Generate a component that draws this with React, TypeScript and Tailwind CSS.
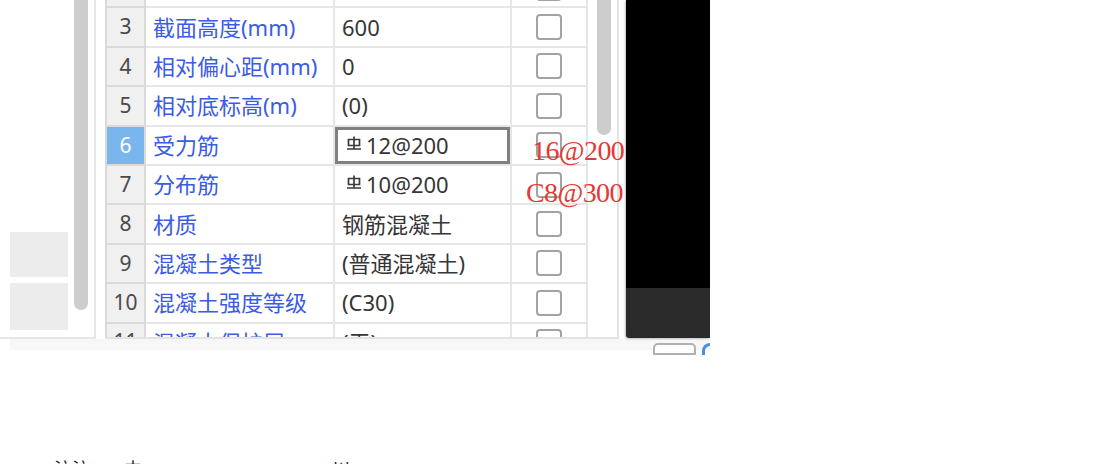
import React from 'react';

type Row = { n: number; name: string; value: string; bar?: boolean; selected?: boolean };

const rows: Row[] = [
  { n: 2, name: '截面宽度(mm)', value: '300' },
  { n: 3, name: '截面高度(mm)', value: '600' },
  { n: 4, name: '相对偏心距(mm)', value: '0' },
  { n: 5, name: '相对底标高(m)', value: '(0)' },
  { n: 6, name: '受力筋', value: '12@200', bar: true, selected: true },
  { n: 7, name: '分布筋', value: '10@200', bar: true },
  { n: 8, name: '材质', value: '钢筋混凝土' },
  { n: 9, name: '混凝土类型', value: '(普通混凝土)' },
  { n: 10, name: '混凝土强度等级', value: '(C30)' },
  { n: 11, name: '混凝土保护层', value: '(无)' },
];

// rebar grade symbol (HRB400), drawn since no font has it
function BarMark() {
  return (
    <svg width="18" height="14" viewBox="0 0 18 14" className="mr-[3px] mb-[5px] shrink-0">
      <path d="M9 0.5V13M3.5 3.5h11v6h-11zM2 13h14" fill="none" stroke="#3a3a3a" strokeWidth="1.7" />
    </svg>
  );
}

function Checkbox() {
  return <div className="w-[26px] h-[26px] border-2 border-[#a3a3a3] rounded-[4px] bg-white" />;
}

export default function App() {
  return (
    <div className="relative w-[1112px] h-[464px] bg-white overflow-hidden font-['Noto_Sans','Noto_Sans_CJK_SC',sans-serif]">
      {/* top screenshot block */}
      <div className="flex w-[710px] h-[339px]">
        {/* left panel */}
        <div className="flex w-[96px] h-[339px] border-r-2 border-b-2 border-[#e6e6e6]">
          <div className="w-[74px] flex flex-col pt-[232px] pl-[10px] gap-[6px]">
            <div className="w-[58px] h-[45px] bg-[#ececec]" />
            <div className="w-[58px] h-[47px] bg-[#ececec]" />
          </div>
          <div className="w-[14px] h-[310px] bg-[#cdcdcd] rounded-b-full" />
        </div>

        <div className="w-[9px]" />

        {/* property table */}
        <div className="flex w-[514px] h-[339px] border-r-2 border-b-2 border-[#e3e3e3]">
          <div className="w-[483px] h-[337px] overflow-hidden border-l-2 border-[#d9d9d9]">
            <div className="-mt-[31px] grid grid-cols-[39px_189px_177px_76px]">
              {rows.map((r) => (
                <React.Fragment key={r.n}>
                  <div
                    className={`h-[39.4px] flex items-center justify-center border-r-2 border-b-2 border-[#dadada] text-[21px] ${
                      r.selected ? 'bg-[#7ab6ee] text-white' : 'bg-[#f0f0f0] text-[#4a4a4a]'
                    }`}
                  >
                    {r.n}
                  </div>
                  <div className="h-[39.4px] flex items-center pl-[7px] border-r-2 border-b-2 border-[#e6e6e6] text-[22px] text-[#3b5ce4] whitespace-nowrap">
                    {r.name}
                  </div>
                  <div
                    className={`h-[39.4px] flex items-center pl-[7px] border-r-2 border-b-2 border-[#e6e6e6] text-[22px] text-[#363636] whitespace-nowrap ${
                      r.selected ? 'shadow-[inset_0_0_0_3px_#808080]' : ''
                    }`}
                  >
                    {r.bar && <span className="pl-[3px]"><BarMark /></span>}
                    {r.value}
                  </div>
                  <div className="h-[39.4px] flex items-center justify-center border-r-2 border-b-2 border-[#e6e6e6]">
                    <Checkbox />
                  </div>
                </React.Fragment>
              ))}
            </div>
          </div>
          <div className="w-[9px]" />
          <div className="w-[14px] h-[135px] bg-[#cdcdcd] rounded-b-full" />
        </div>

        <div className="w-[7px]" />

        {/* graphics view */}
        <div className="flex-1 h-[338px] flex flex-col rounded-bl-[3px] overflow-hidden shadow-[-1px_1px_2px_rgba(0,0,0,0.25)]">
          <div className="h-[288px] bg-black" />
          <div className="flex-1 bg-[#2a2a2a]" />
        </div>
      </div>

      {/* bottom strip of dialog */}
      <div className="flex ml-[10px] w-[700px] h-[11px] bg-[#f7f7f7]">
        <div className="ml-[643px] mt-[4px] w-[46px] h-[12px] border-2 border-[#b0b0b0] rounded-t-[5px] bg-white" />
        <div className="ml-[6px] mt-[4px] w-[8px] h-[12px] border-l-[3px] border-t-[3px] border-[#4a90e2] rounded-tl-full" />
      </div>

      {/* next line of the page, cut off */}
      <div className="flex mt-[109px] text-[18px] leading-none text-[#222] font-['Noto_Sans_CJK_SC',sans-serif]">
        <span className="ml-[54px]">注注</span>
        <span className="ml-[34px]">中</span>
        <span className="ml-[190px]">川</span>
      </div>

      {/* red annotations over the table */}
      <div className="absolute left-[532px] top-[137px] text-[28px] leading-none tracking-[-0.6px] text-[#e53935] font-['Liberation_Serif',serif]">
        16@200
      </div>
      <div className="absolute left-[526px] top-[179px] text-[28px] leading-none tracking-[-0.6px] text-[#e53935] font-['Liberation_Serif',serif]">
        C8@300
      </div>
    </div>
  );
}
